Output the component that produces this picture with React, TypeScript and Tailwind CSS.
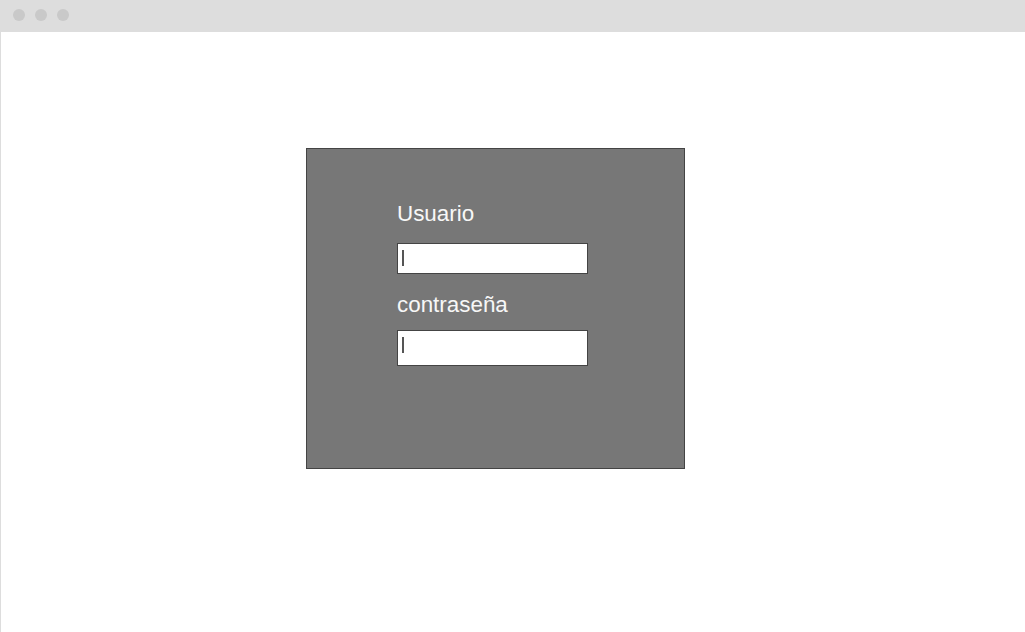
import React from "react";

function Field({ label, height, gapTop, gapInput }: { label: string; height: string; gapTop: string; gapInput: string }) {
  return (
    <div className={gapTop}>
      <div className="text-[22.4px] leading-[26px] text-[#f7f7f7]">{label}</div>
      <div className={`${gapInput} ${height} w-[191px] border border-[#444444] bg-white pl-[4px] pt-[6px]`}>
        <div className="h-[16px] w-[2px] bg-[#555555]" />
      </div>
    </div>
  );
}

export default function App() {
  return (
    <div className="flex h-screen w-full flex-col bg-white" style={{ fontFamily: '"Liberation Sans", Arial, sans-serif' }}>
      <div className="flex h-[32px] shrink-0 gap-[10px] bg-[#dddddd] pl-[13px] pt-[9px]">
        <div className="h-[12px] w-[12px] rounded-full bg-[#c9c9c9]" />
        <div className="h-[12px] w-[12px] rounded-full bg-[#c9c9c9]" />
        <div className="h-[12px] w-[12px] rounded-full bg-[#c9c9c9]" />
      </div>
      <div className="flex-1 border-l border-[#dddddd]">
        <div className="ml-[305px] mt-[116px] h-[321px] w-[379px] border border-[#444444] bg-[#777777] pl-[90px] pt-[52px]">
          <Field label="Usuario" height="h-[31px]" gapTop="" gapInput="mt-[16px]" />
          <Field label="contraseña" height="h-[36px]" gapTop="mt-[18px]" gapInput="mt-[12px]" />
        </div>
      </div>
    </div>
  );
}
